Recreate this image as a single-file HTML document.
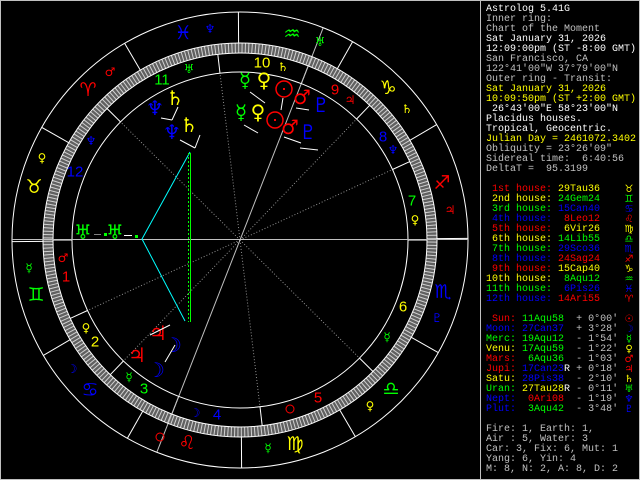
<!DOCTYPE html>
<html><head><meta charset="utf-8">
<style>
html,body{margin:0;padding:0;background:#000;}
#w{position:relative;width:640px;height:480px;background:#000;overflow:hidden;}
svg{position:absolute;left:0;top:0;}
#p{position:absolute;left:486px;top:5px;font-family:"Liberation Mono",monospace;font-size:10px;line-height:10px;color:#c0c0c0;}
#p div{height:10px;white-space:pre;}
.w{color:#fff}.y{color:#ffff00}.r{color:#ff0000}.g{color:#00ff00}.b{color:#0000ff}.c{color:#c0c0c0}
</style></head><body><div id="w">
<svg id="s" width="640" height="480" xmlns="http://www.w3.org/2000/svg" font-family="DejaVu Sans, sans-serif" text-anchor="middle" dominant-baseline="central">
<rect x="0.5" y="0.5" width="639" height="479" fill="none" stroke="#c0c0c0"/>
<line x1="480.5" y1="0" x2="480.5" y2="480" stroke="#c0c0c0"/>
<circle cx="240" cy="240" r="192" fill="none" stroke="#606060" stroke-width="9"/>
<g id="lines"></g>
<circle cx="240" cy="240" r="228" fill="none" stroke="#fff"/>
<circle cx="240" cy="240" r="197" fill="none" stroke="#fff"/>
<circle cx="240" cy="240" r="187" fill="none" stroke="#fff"/>
<circle cx="240" cy="240" r="168" fill="none" stroke="#fff"/>
<line x1="12" y1="239.5" x2="468" y2="239.5" stroke="#c0c0c0"/>
<polyline points="190,152 142,239 185,321" fill="none" stroke="#00ffff"/>
<line x1="190.5" y1="153" x2="190.5" y2="322" stroke="#00ff00"/>
<line x1="188.5" y1="153" x2="188.5" y2="322" stroke="#00ff00" stroke-dasharray="2 2"/>
<g font-size="19">
<text x="183" y="33" fill="#0000ff">♓</text>
<text x="88" y="90" fill="#ff0000">♈</text>
<text x="34" y="187" fill="#ffff00">♉</text>
<text x="36" y="295" fill="#00ff00">♊</text>
<text x="90" y="390" fill="#0000ff">♋</text>
<text x="187" y="443" fill="#ff0000">♌</text>
<text x="295" y="444" fill="#ffff00">♍</text>
<text x="391" y="389" fill="#00ff00">♎</text>
<text x="443" y="292" fill="#0000ff">♏</text>
<text x="442" y="183" fill="#ff0000">♐</text>
<text x="388" y="88" fill="#ffff00">♑</text>
<text x="292" y="34" fill="#00ff00">♒</text>
</g>
<g font-size="12">
<text x="210" y="29" fill="#0000ff">♆</text>
<text x="189" y="69" fill="#00ff00">♅</text>
<text x="110" y="72" fill="#ff0000">♂</text>
<text x="91" y="141" fill="#0000ff">♆</text>
<text x="42" y="158" fill="#ffff00">♀</text>
<text x="320" y="42" fill="#00ff00">♅</text>
<text x="283" y="67" fill="#ffff00">♄</text>
<text x="350" y="100" fill="#ff0000">♃</text>
<text x="407" y="109" fill="#ffff00">♄</text>
<text x="393" y="150" fill="#0000ff">♆</text>
<text x="450" y="210" fill="#ff0000">♃</text>
<text x="415" y="220" fill="#ffff00">♀</text>
<text x="63" y="258" fill="#ff0000">♂</text>
<text x="29" y="268" fill="#00ff00">☿</text>
<text x="86" y="328" fill="#ffff00">♀</text>
<text x="72" y="369" fill="#0000ff">☽</text>
<text x="129" y="377" fill="#00ff00">☿</text>
<text x="195" y="413" fill="#0000ff">☽</text>
<text x="437" y="318" fill="#0000ff">♇</text>
<text x="387" y="337" fill="#00ff00">☿</text>
<text x="370" y="406" fill="#ffff00">♀</text>
<text x="268" y="448" fill="#00ff00">☿</text>
</g>
<g fill="none" stroke="#ff0000"><circle cx="160" cy="437" r="4"/><circle cx="290" cy="409" r="4"/></g>
<g font-family="Liberation Sans, sans-serif" font-size="15">
<text x="162" y="80" fill="#00ff00">11</text>
<text x="75" y="172" fill="#0000ff">12</text>
<text x="262" y="63" fill="#ffff00">10</text>
<text x="335" y="90" fill="#ff0000">9</text>
<text x="383" y="137" fill="#0000ff">8</text>
<text x="412" y="201" fill="#00ff00">7</text>
<text x="66" y="277" fill="#ff0000">1</text>
<text x="95" y="342" fill="#ffff00">2</text>
<text x="144" y="389" fill="#00ff00">3</text>
<text x="217" y="415" fill="#0000ff">4</text>
<text x="318" y="398" fill="#ff0000">5</text>
<text x="403" y="307" fill="#ffff00">6</text>
</g>
<g font-size="20">
<text x="175" y="98" fill="#ffff00">♄</text>
<text x="155" y="108" fill="#0000ff">♆</text>
<text x="172" y="132" fill="#0000ff">♆</text>
<text x="189" y="125" fill="#ffff00">♄</text>
<text x="245" y="80" fill="#00ff00">☿</text>
<text x="264" y="80" fill="#ffff00">♀</text>
<text x="302" y="97" fill="#ff0000">♂</text>
<text x="321" y="105" fill="#0000ff">♇</text>
<text x="241" y="112" fill="#00ff00">☿</text>
<text x="258" y="112" fill="#ffff00">♀</text>
<text x="290" y="127" fill="#ff0000">♂</text>
<text x="308" y="132" fill="#0000ff">♇</text>
<text x="158" y="333" fill="#ff0000">♃</text>
<text x="137" y="355" fill="#ff0000">♃</text>
<text x="173" y="345" fill="#0000ff">☽</text>
<text x="156" y="370" fill="#0000ff">☽</text>
<text x="83" y="232" fill="#00ff00">♅</text>
<text x="115" y="232" fill="#00ff00">♅</text>
</g>
<g fill="none" stroke="#ff0000" stroke-width="1.5"><circle cx="284" cy="89" r="8"/><circle cx="275" cy="120" r="8"/></g>
<g fill="#ff0000"><rect x="283" y="88" width="2" height="2"/><rect x="274" y="119" width="2" height="2"/></g>
<g stroke="#fff" fill="none">
<line x1="161" y1="118" x2="172" y2="120"/><line x1="172" y1="120" x2="178" y2="107"/>
<line x1="180" y1="140" x2="195" y2="148"/><line x1="195" y1="148" x2="200" y2="135"/>
<line x1="250" y1="92" x2="265" y2="103"/><line x1="244" y1="125" x2="258" y2="133"/>
<line x1="283" y1="98" x2="281" y2="110"/><line x1="296" y1="108" x2="309" y2="110"/>
<line x1="284" y1="137" x2="301" y2="143"/><line x1="300" y1="148" x2="318" y2="150"/>
<line x1="150" y1="335" x2="170" y2="325"/><line x1="165" y1="362" x2="175" y2="345"/>
<line x1="124" y1="235.5" x2="132" y2="235.5"/>
</g>
<line x1="94" y1="234.5" x2="101" y2="234.5" stroke="#808080"/>
<g fill="#00ff00"><rect x="104" y="233" width="3" height="3"/><rect x="135" y="235" width="3" height="3"/></g>
</svg>
<div id="p">
<div class="w">Astrolog 5.41G</div>
<div>Inner ring:</div>
<div>Chart of the Moment</div>
<div class="w">Sat January 31, 2026</div>
<div class="w">12:09:00pm (ST -8:00 GMT)</div>
<div>San Francisco, CA</div>
<div>122°41'00"W 37°79'00"N</div>
<div>Outer ring - Transit:</div>
<div class="y">Sat January 31, 2026</div>
<div class="y">10:09:50pm (ST +2:00 GMT)</div>
<div class="w"> 26°43'00"E 58°23'00"N</div>
<div class="w">Placidus houses.</div>
<div class="w">Tropical, Geocentric.</div>
<div class="y">Julian Day = 2461072.3402</div>
<div>Obliquity = 23°26'09"</div>
<div>Sidereal time:  6:40:56</div>
<div>DeltaT =  95.3199</div>
<div> </div>
<div><span class="r"> 1st house:</span> <span class="y">29Tau36</span></div>
<div><span class="y"> 2nd house:</span> <span class="g">24Gem24</span></div>
<div><span class="g"> 3rd house:</span> <span class="b">15Can40</span></div>
<div><span class="b"> 4th house:</span> <span class="r"> 8Leo12</span></div>
<div><span class="r"> 5th house:</span> <span class="y"> 6Vir26</span></div>
<div><span class="y"> 6th house:</span> <span class="g">14Lib55</span></div>
<div><span class="g"> 7th house:</span> <span class="b">29Sco36</span></div>
<div><span class="b"> 8th house:</span> <span class="r">24Sag24</span></div>
<div><span class="r"> 9th house:</span> <span class="y">15Cap40</span></div>
<div><span class="y">10th house:</span> <span class="g"> 8Aqu12</span></div>
<div><span class="g">11th house:</span> <span class="b"> 6Pis26</span></div>
<div><span class="b">12th house:</span> <span class="r">14Ari55</span></div>
<div> </div>
<div><span class="r"> Sun:</span> <span class="g">11Aqu58</span>  <span class="c">+ 0°00'</span></div>
<div><span class="b">Moon:</span> <span class="b">27Can37</span>  <span class="c">+ 3°28'</span></div>
<div><span class="g">Merc:</span> <span class="g">19Aqu12</span>  <span class="c">- 1°54'</span></div>
<div><span class="y">Venu:</span> <span class="g">17Aqu59</span>  <span class="c">- 1°22'</span></div>
<div><span class="r">Mars:</span> <span class="g"> 6Aqu36</span>  <span class="c">- 1°03'</span></div>
<div><span class="r">Jupi:</span> <span class="b">17Can23</span><span class="w">R</span> <span class="c">+ 0°18'</span></div>
<div><span class="y">Satu:</span> <span class="b">28Pis38</span>  <span class="c">- 2°10'</span></div>
<div><span class="g">Uran:</span> <span class="y">27Tau28</span><span class="w">R</span> <span class="c">- 0°11'</span></div>
<div><span class="b">Nept:</span> <span class="r"> 0Ari08</span>  <span class="c">- 1°19'</span></div>
<div><span class="b">Plut:</span> <span class="g"> 3Aqu42</span>  <span class="c">- 3°48'</span></div>
<div> </div>
<div>Fire: 1, Earth: 1,</div>
<div>Air : 5, Water: 3</div>
<div>Car: 3, Fix: 6, Mut: 1</div>
<div>Yang: 6, Yin: 4</div>
<div>M: 8, N: 2, A: 8, D: 2</div>
</div>
<div style="position:absolute;left:622px;top:185px;width:14px;font-family:'DejaVu Sans',sans-serif;font-size:10px;line-height:10px;text-align:center;">
<div class="y" style="height:10px">♉</div><div class="g" style="height:10px">♊</div><div class="b" style="height:10px">♋</div><div class="r" style="height:10px">♌</div><div class="y" style="height:10px">♍</div><div class="g" style="height:10px">♎</div><div class="b" style="height:10px">♏</div><div class="r" style="height:10px">♐</div><div class="y" style="height:10px">♑</div><div class="g" style="height:10px">♒</div><div class="b" style="height:10px">♓</div><div class="r" style="height:10px">♈</div>
<div style="height:10px"></div>
<div class="r" style="height:10px">☉</div><div class="b" style="height:10px">☽</div><div class="g" style="height:10px">☿</div><div class="y" style="height:10px">♀</div><div class="r" style="height:10px">♂</div><div class="r" style="height:10px">♃</div><div class="y" style="height:10px">♄</div><div class="g" style="height:10px">♅</div><div class="b" style="height:10px">♆</div><div class="b" style="height:10px">♇</div>
</div>
</div>
<script>
(function(){
var g=document.getElementById('lines'),s='';
function P(a,r){a=a*Math.PI/180;return [240+r*Math.cos(a),240-r*Math.sin(a)];}
function L(a,r1,r2,c,extra){var p=P(a,r1),q=P(a,r2);s+='<line x1="'+p[0].toFixed(1)+'" y1="'+p[1].toFixed(1)+'" x2="'+q[0].toFixed(1)+'" y2="'+q[1].toFixed(1)+'" stroke="'+c+'" '+(extra||'')+'/>';}
for(var d=0;d<360;d++){L(d+0.4,187,197,'#d0d0d0');}
for(var k=0;k<12;k++){L(120.4+30*k,197,228,'#fff');}
var cusps=[180,204.8,226.07,248.6,276.83,315.32,0,24.8,46.07,68.6,96.83,135.32];
for(var i=0;i<12;i++){L(cusps[i],168,187,'#fff');
 if(i%3!=0){L(cusps[i],0,168,'#909090','stroke-dasharray="1 2"');}}
L(68.6,-228,228,'#c0c0c0');
g.innerHTML=s;
})();
</script>
</body></html>
